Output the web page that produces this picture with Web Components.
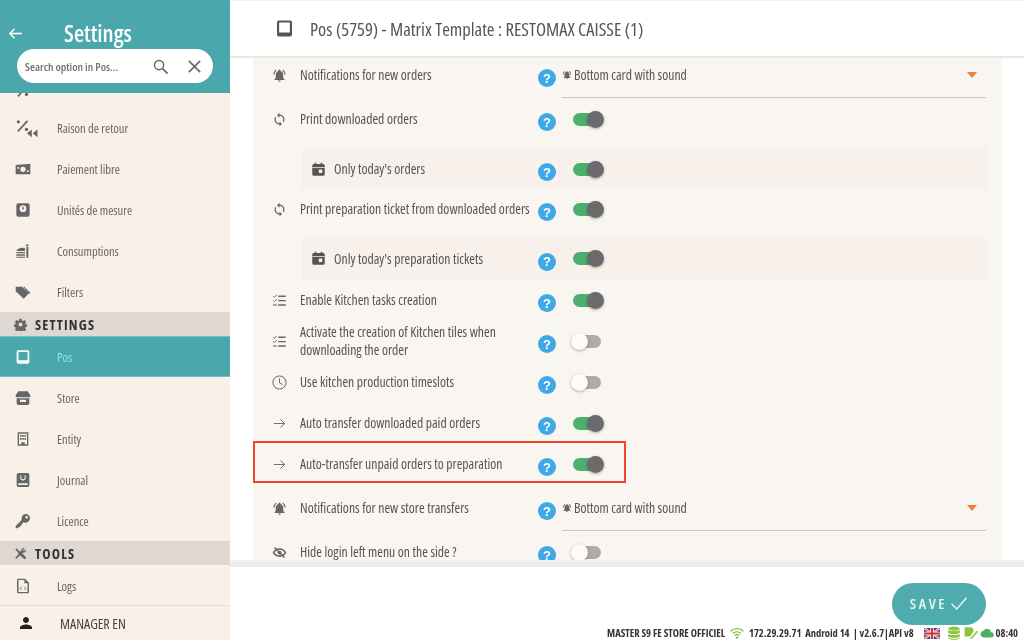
<!DOCTYPE html>
<html lang="en"><head><meta charset="utf-8"><title>Settings</title>
<style>
html,body{margin:0;height:100%;overflow:hidden;background:#fff}
body{font-family:"Open Sans","Lato",sans-serif;font-stretch:75%;color:#555}
</style></head><body>
<app-shell>
  <side-bar slot="side">
    <nav-item partial icon="pct"></nav-item>
    <nav-item icon="percent">Raison de retour</nav-item>
    <nav-item icon="money">Paiement libre</nav-item>
    <nav-item icon="scale">Unités de mesure</nav-item>
    <nav-item icon="food">Consumptions</nav-item>
    <nav-item icon="tags">Filters</nav-item>
    <nav-section icon="gear">SETTINGS</nav-section>
    <nav-item active icon="tablet">Pos</nav-item>
    <nav-item icon="store">Store</nav-item>
    <nav-item icon="building">Entity</nav-item>
    <nav-item icon="journal">Journal</nav-item>
    <nav-item icon="key">Licence</nav-item>
    <nav-section icon="tools">TOOLS</nav-section>
    <nav-item icon="code">Logs</nav-item>
  </side-bar>
  <main-head slot="head">Pos (5759) - Matrix Template : RESTOMAX CAISSE (1)</main-head>
  <set-row first h="46" icon="bell">Notifications for new orders<sel-ect slot="control">Bottom card with sound</sel-ect></set-row>
  <set-row h="42" icon="sync">Print downloaded orders<to-ggle slot="control" on></to-ggle></set-row>
  <set-row sub h="42" icon="cal">Only today's orders<to-ggle slot="control" on></to-ggle></set-row>
  <set-row h="38" icon="sync">Print preparation ticket from downloaded orders<to-ggle slot="control" on></to-ggle></set-row>
  <set-row sub h="41" icon="cal" gap="10">Only today's preparation tickets<to-ggle slot="control" on></to-ggle></set-row>
  <set-row h="42" icon="list">Enable Kitchen tasks creation<to-ggle slot="control" on></to-ggle></set-row>
  <set-row h="40" icon="list">Activate the creation of Kitchen tiles when downloading the order<to-ggle slot="control"></to-ggle></set-row>
  <set-row h="42" icon="clock">Use kitchen production timeslots<to-ggle slot="control"></to-ggle></set-row>
  <set-row h="40" icon="arrow">Auto transfer downloaded paid orders<to-ggle slot="control" on></to-ggle></set-row>
  <set-row h="42" icon="arrow" mark>Auto-transfer unpaid orders to preparation<to-ggle slot="control" on></to-ggle></set-row>
  <set-row h="46" icon="bell">Notifications for new store transfers<sel-ect slot="control">Bottom card with sound</sel-ect></set-row>
  <set-row h="42" icon="eyeoff">Hide login left menu on the side ?<to-ggle slot="control"></to-ggle></set-row>
  <foot-bar slot="foot"></foot-bar>
</app-shell>
<script>
const P={
tablet:'<path fill-rule="evenodd" d="M5 2h14a2.500 2.500 0 0 1 2.500 2.500v15a2.500 2.500 0 0 1-2.500 2.500H5a2.500 2.500 0 0 1-2.500-2.500v-15A2.500 2.500 0 0 1 5 2zm.2 2.400v12.600h13.600V4.400z"/>',
bell:'<path d="M7.580 4.080 6.150 2.650C3.750 4.480 2.170 7.300 2.030 10.500h2c.15-2.650 1.510-4.970 3.550-6.420zm12.390 6.420h2c-.15-3.200-1.730-6.020-4.120-7.850l-1.420 1.430c2.020 1.450 3.390 3.770 3.540 6.420zM18 11c0-3.070-1.640-5.640-4.500-6.320V4c0-.83-.67-1.500-1.500-1.500s-1.500.67-1.500 1.500v.68C7.630 5.360 6 7.920 6 11v5l-2 2v1h16v-1l-2-2v-5zm-6 11c.14 0 .27-.01.4-.04.65-.14 1.180-.58 1.440-1.180.1-.24.15-.5.15-.78h-4c.01 1.100.9 2 2.010 2z"/>',
sync:'<path d="M12 4V1L8 5l4 4V6c3.310 0 6 2.690 6 6 0 1.010-.25 1.970-.7 2.800l1.460 1.460C19.540 15.030 20 13.570 20 12c0-4.420-3.580-8-8-8zm0 14c-3.310 0-6-2.690-6-6 0-1.010.25-1.970.7-2.800L5.240 7.740C4.460 8.970 4 10.430 4 12c0 4.420 3.580 8 8 8v3l4-4-4-4v3z"/>',
cal:'<path fill-rule="evenodd" d="M6 1h2.500v2h7V1H18v2h1.500A2.500 2.500 0 0 1 22 5.500v14a2.500 2.500 0 0 1-2.500 2.500h-15A2.500 2.500 0 0 1 2 19.500v-14A2.500 2.500 0 0 1 4.500 3H6zm6.500 11v5.500H18V12z"/><rect x="2" y="8" width="20" height="1.200" fill="#f8f1eb"/>',
list:'<path d="M10 4h12v2.200H10zM10 11h12v2.200H10zM10 18h12v2.200H10z"/><path d="M2 5l1.800 1.800L7.400 3" fill="none" stroke="currentColor" stroke-width="1.500"/><path d="M2 12l1.800 1.800L7.400 10" fill="none" stroke="currentColor" stroke-width="1.500"/><rect x="2" y="18" width="2.500" height="2.500"/><rect x="5.500" y="18" width="2" height="2.500"/>',
clock:'<circle cx="12" cy="12" r="10.500" fill="none" stroke="currentColor" stroke-width="1.600"/><path d="M12 5.500v7l5 3" fill="none" stroke="currentColor" stroke-width="1.600"/>',
arrow:'<path d="M3 12h17M13.500 5.500 20 12l-6.500 6.500" fill="none" stroke="currentColor" stroke-width="1.500"/>',
eyeoff:'<path fill-rule="evenodd" d="M12 5C7 5 3 8 1 12c2 4 6 7 11 7s9-3 11-7c-2-4-6-7-11-7zm0 2.500c3.400 0 6.300 1.800 8 4.500-1.700 2.700-4.600 4.500-8 4.500S5.700 14.700 4 12c1.700-2.700 4.600-4.500 8-4.500z"/><circle cx="12" cy="12" r="3"/><path d="M4 4l16 16" stroke="currentColor" stroke-width="2.200"/>',
percent:'<path d="M3 15 13 4" stroke="currentColor" stroke-width="1.800" fill="none"/><circle cx="3.500" cy="5" r="1.700"/><circle cx="12" cy="13" r="1.700"/><path d="M17.500 13v8l-5-4zM23.500 13v8l-5-4z"/>',
pct:'<path d="M3 15 13 4" stroke="currentColor" stroke-width="1.800" fill="none"/><circle cx="12" cy="13" r="1.700"/>',
money:'<path fill-rule="evenodd" d="M1 6l22-2v16H1zm11 2.500a4 4 0 1 0 0 8 4 4 0 0 0 0-8zM3.500 9v2.500H6V9zm14.500 5v2.500h2.500V14z"/>',
scale:'<path fill-rule="evenodd" d="M5 2h14a3 3 0 0 1 3 3v14a3 3 0 0 1-3 3H5a3 3 0 0 1-3-3V5a3 3 0 0 1 3-3zm7 3a5 5 0 1 0 0 10 5 5 0 0 0 0-10zm-.8 2h1.600l.6 4h-2.800z"/>',
food:'<path d="M2 12c1-3 5-5 9-5 2 0 3 .5 4 1v4zM2 13.500h13v2H2zM2 17h13v2H2zM2 20.500h13V22H2zM17 6h3v16h-3zM16 3l4-1v3h-4z"/>',
tags:'<path d="M1 4h9.500L21 14l-8 8L1 11z"/><path d="M14 4l9 9-1 2-10-11z"/>',
gear:'<path fill-rule="evenodd" d="M10 1.500h4l.6 3 2.200 1 2.700-1.600 2.800 2.800-1.600 2.700 1 2.200 3 .6v4l-3 .6-1 2.200 1.600 2.700-2.800 2.800-2.700-1.600-2.200 1-.6 3h-4l-.6-3-2.200-1-2.700 1.600-2.800-2.800 1.600-2.700-1-2.200-3-.6v-4l3-.6 1-2.200-1.600-2.700 2.800-2.800 2.700 1.600 2.200-1zM12 8.200a3.800 3.800 0 1 0 0 7.600 3.800 3.800 0 0 0 0-7.600z"/>',
store:'<path fill-rule="evenodd" d="M5 2h14l4 6v3H1V8zM2.500 12.500h19V20a2.500 2.500 0 0 1-2.500 2.500H5A2.500 2.500 0 0 1 2.500 20zm5 2v3.500h9v-3.500z"/>',
building:'<path fill-rule="evenodd" d="M4 2h16v20H4zm2 2v16h3.500v-3h5v3H18V4zm1.500 2h2.500v2.500H7.500zm3.300 0h2.500v2.500h-2.500zm3.300 0h2.500v2.500h-2.500zM7.500 10.500H10V13H7.500zm3.300 0h2.500V13h-2.500zm3.300 0h2.500V13h-2.500z"/>',
journal:'<path fill-rule="evenodd" d="M5 1.500h14a2.500 2.500 0 0 1 2.500 2.500v16a2.500 2.500 0 0 1-2.500 2.500H5A2.500 2.500 0 0 1 2.500 20V4A2.500 2.500 0 0 1 5 1.500zM5 17v2.500h14V17zm3-12v6l4 2 4-2V5h-1.500v5L12 11l-2.500-1V5z"/>',
key:'<path fill-rule="evenodd" d="M16 1.500a6.500 6.500 0 0 1 6.500 6.500A6.500 6.500 0 0 1 13 13.800L10 16.800V19H7.500v2.500H5L3.500 23H1v-3.500l9.200-9.200A6.500 6.500 0 0 1 16 1.500zm1.500 3a2 2 0 1 0 0 4 2 2 0 0 0 0-4z"/>',
tools:'<path d="M2.500 4.500 4.500 2.500l5.500 5.500 1-1 11 12a2.300 2.300 0 0 1-3 3L7 12l1-1.500z"/><path d="M3 19 13.500 8.500C12.500 5 15.500 1 20 2l-3.500 3.500 2 2L22 4c1 4.500-3 7.500-6.500 6.500L5 21a1.400 1.400 0 0 1-2-2z"/>',
code:'<path fill-rule="evenodd" d="M5 1h10l6 6v14a2 2 0 0 1-2 2H5a2 2 0 0 1-2-2V3a2 2 0 0 1 2-2zm.2 2v18h13.600V8H14V3z"/><path d="M10 13l-2.500 2.500L10 18M14 13l2.500 2.500L14 18" fill="none" stroke="currentColor" stroke-width="1.400"/>',
person:'<path d="M12 12c2.210 0 4-1.790 4-4s-1.790-4-4-4-4 1.790-4 4 1.790 4 4 4zm0 2c-2.670 0-8 1.340-8 4v2h16v-2c0-2.660-5.330-4-8-4z"/>',
search:'<circle cx="10" cy="10" r="6.500" fill="none" stroke="currentColor" stroke-width="2"/><path d="M15 15l7 7" stroke="currentColor" stroke-width="2.400"/>',
close:'<path d="M4 4l16 16M20 4 4 20" stroke="currentColor" stroke-width="2.200"/>',
back:'<path d="M22 12H3M10.500 4.500 3 12l7.500 7.500" fill="none" stroke="currentColor" stroke-width="2.200"/>',
check:'<path d="M2 13l7 7L22 5" fill="none" stroke="currentColor" stroke-width="1.900"/>',
wifi:'<path d="M1 9c6-6 16-6 22 0M5 13c4-4 10-4 14 0M8.500 16.500c2-2 5-2 7 0" fill="none" stroke="currentColor" stroke-width="2.400"/><circle cx="12" cy="20" r="2"/>',
db:'<ellipse cx="12" cy="4.500" rx="10" ry="3.500"/><path d="M2 7c1 2.500 19 2.500 20 0v4.500c-1 3-19 3-20 0zM2 13.500c1 2.500 19 2.500 20 0V18c-1 3-19 3-20 0z"/><path d="M2 19.500c2 3 18 3 20 0V20c0 2-4.500 3.500-10 3.500S2 22 2 20z"/>',
edit:'<path d="M1 2h12l3 3v5l-5 8H1z"/><path d="M12 20 22 8l2 2-10 12H8z"/>',
cloud:'<path d="M19 10.500A7 7 0 0 0 5.800 8.600 5.500 5.500 0 0 0 6 19.500h13a4.500 4.500 0 0 0 0-9z"/>'
};
function def(name,css,html,init){
  customElements.define(name,class extends HTMLElement{
    connectedCallback(){
      if(this.shadowRoot)return;
      const r=this.attachShadow({mode:'open'});
      r.innerHTML='<style>'+css+'</style>'+(typeof html==='function'?html(this):html);
      if(init)init(this,r);
    }
  });
}
def('x-icon',':host{display:inline-flex;flex:none;width:var(--s,16px);height:var(--s,16px);color:inherit}svg{width:100%;height:100%;fill:currentColor;display:block}',
 h=>`<svg viewBox="0 0 24 24" aria-hidden="true">${P[h.getAttribute('name')]||''}</svg>`);
def('app-shell',`:host{display:flex;width:1024px;height:640px;overflow:hidden;background:#fff;filter:blur(.35px)}
 .m{flex:1;min-width:0;display:flex;flex-direction:column}
 .b{height:502px;padding:0 22px 0 23px;flex:none;overflow:hidden}
 .p{height:100%;background:#f9f5f1;overflow:hidden;display:flex;flex-direction:column}
 .sh{height:7px;flex:none;background:linear-gradient(#f1f2f5,#e9ebf0)}`,
 `<slot name="side"></slot><div class="m"><slot name="head"></slot><div class="b"><div class="p"><slot></slot></div></div><div class="sh"></div><slot name="foot"></slot></div>`);
def('side-bar',`:host{display:flex;flex-direction:column;width:230px;height:640px;flex:none;background:#f9f0e8;overflow:hidden}
 header{height:93px;flex:none;background:#4aa8ac;color:#fff;display:flex;flex-direction:column;box-sizing:border-box;padding:18px 17px 0 0}
 .t{display:flex;align-items:center;height:31px}
 .t x-icon{--s:15px;margin:0 41px 0 8px}
 .t b{font-weight:600;font-size:23.300px;line-height:31px}
 .s{margin:0 0 0 17px;height:34px;background:#fff;border-radius:17px;display:flex;align-items:center;color:#666;padding:0 10px 0 8px;font-size:11.500px;font-weight:600;white-space:nowrap}
 .s span{flex:1;color:#707070}
 .s x-icon{--s:17px;margin-left:17px}
 .l{flex:1;min-height:0;overflow:hidden;display:flex;flex-direction:column}
 .u{height:35px;flex:none;box-sizing:border-box;border-top:1px solid #e5ded8;display:flex;align-items:center;color:#444;font-size:14px}
 .u x-icon{--s:18px;margin:0 25px 0 17px;color:#222}`,
 `<header><div class="t"><x-icon name="back"></x-icon><b>Settings</b></div><div class="s"><span>Search option in Pos...</span><x-icon name="search"></x-icon><x-icon name="close"></x-icon></div></header>
 <div class="l"><slot></slot></div><div class="u"><x-icon name="person"></x-icon>MANAGER EN</div>`);
def('nav-item',`:host{display:flex;flex:none;height:41px;box-sizing:border-box;padding-top:1px;overflow:hidden;align-items:center;color:#666;font-size:12.500px;padding-left:15px;white-space:nowrap}
 :host([partial]){height:14px;padding-top:0;align-items:flex-end}
 :host([partial]) x-icon{margin-bottom:2px}
 x-icon{--s:16px;margin-right:26px;color:#666}
 :host([icon=percent]) x-icon,:host([icon=pct]) x-icon{--s:23px;margin-right:19px}
 :host([active]){background:#4aa8ac;color:#8be6e6;box-shadow:inset 0 1px 0 #62c6c8,inset 0 -1px 0 #62c6c8}
 :host([active]) x-icon{color:#fff}`,
 h=>`<x-icon name="${h.getAttribute('icon')}"></x-icon><span><slot></slot></span>`);
def('nav-section',`:host{display:flex;flex:none;height:24px;align-items:center;background:#dfd8d2;color:#333;font-weight:700;font-size:14px;letter-spacing:1.200px;padding-left:14px}
 x-icon{--s:13px;margin-right:8px;color:#666}`,
 h=>`<x-icon name="${h.getAttribute('icon')}"></x-icon><slot></slot>`);
def('main-head',`:host{display:flex;flex:none;height:58px;box-sizing:border-box;border-bottom:2px solid #ebe7e3;border-top:1px solid #f2f2f2;align-items:center;padding-left:45px;font-size:18.550px;color:#555;white-space:nowrap}
 x-icon{--s:19px;margin-right:16px}`,
 `<x-icon name="tablet"></x-icon><slot></slot>`);
def('set-row',`:host{display:grid;flex:none;position:relative;align-items:center;grid-template-columns:47px 238px 18px 6px 424px;font-size:13.700px;line-height:18px;color:#555;box-sizing:border-box}
 :host([first]){margin-top:-6px}
 :host([sub]){margin-left:49px;width:685px;grid-template-columns:32px 204px 18px 6px 425px;background:#f8f1eb}
 .i{display:flex;justify-content:center;padding-left:6px;color:#666}
 :host([sub]) .i{padding-left:0;color:#555}
 x-icon{--s:15px}
 .c{grid-column:5;align-self:stretch;display:flex;align-items:center}
 .h{grid-column:3;margin-top:6px}
 .mk{position:absolute;left:0;top:-2px;width:373px;height:42px;box-sizing:border-box;border:2px solid #f0452a;pointer-events:none}`,
 h=>`<div class="i"><x-icon name="${h.getAttribute('icon')}"></x-icon></div><div><slot></slot></div><help-dot class="h"></help-dot><div class="c"><slot name="control"></slot></div>${h.hasAttribute('mark')?'<div class="mk"></div>':''}`,
 h=>{h.style.height=h.getAttribute('h')+'px';
  if(h.hasAttribute('sub'))h.style.marginTop=(h.getAttribute('gap')||8)+'px';});
def('help-dot',`:host{display:flex;width:18px;height:18px;border-radius:50%;background:#3fa9e8;color:#fff;align-items:center;justify-content:center;font:700 13px "Liberation Sans",sans-serif}`,`?`);
def('to-ggle',`:host{display:block;position:relative;width:28px;height:13px;margin-left:11px;border-radius:7px;background:#b0aba7}
 :host([on]){background:#4caf6e}
 i{position:absolute;top:-2px;left:-2px;width:17px;height:17px;border-radius:50%;background:#fcfbfa;box-shadow:0 1px 3px rgba(0,0,0,.3)}
 :host([on]) i{left:14px;background:#6b6a6c}`,`<i></i>`);
def('sel-ect',`:host{display:flex;flex:1;align-items:center;align-self:stretch;box-sizing:border-box;border-bottom:1px solid #ccc8c4;color:#555;font-size:13.700px;padding:1px 9px 0 0}
 x-icon{--s:10px;margin-right:2px;color:#666}
 span{flex:1}
 .c{width:0;height:0;border:5.500px solid transparent;border-top:6px solid #ee8038;border-bottom:0}`,
 `<x-icon name="bell"></x-icon><span><slot></slot></span><div class="c"></div>`);
def('foot-bar',`:host{flex:1;display:flex;flex-direction:column;min-height:0}
 .sv{display:flex;justify-content:flex-end;padding:16px 38px 0 0}
 button{width:94px;height:42px;border:0;border-radius:21px;background:#4eabae;color:#e9f7f7;font:inherit;font-weight:600;font-size:15px;letter-spacing:2.600px;display:flex;align-items:center;justify-content:center;gap:3px;padding:0 0 3px}
 button x-icon{--s:18px}
 .st{flex:1;display:flex;justify-content:flex-end;align-items:center;padding-right:6px;font-size:10.500px;font-weight:700;color:#333;white-space:nowrap;margin-top:1px}
 .st x-icon{--s:14px}
 .g{color:#7ec23c;margin:0 5px}
 .f{width:16px;height:11px;margin:0 7px 0 10px;flex:none;display:block}`,
 `<div class="sv"><button>SAVE<x-icon name="check"></x-icon></button></div>
 <div class="st">MASTER S9 FE STORE OFFICIEL<x-icon class="g" name="wifi"></x-icon>172.29.29.71&nbsp;&nbsp;Android 14&nbsp;&nbsp;|&nbsp;v2.6.7|API v8<svg class="f" viewBox="0 0 16 11"><rect width="16" height="11" fill="#2b3f86"/><path d="M0 0l16 11M16 0 0 11" stroke="#fff" stroke-width="2.200"/><path d="M0 0l16 11M16 0 0 11" stroke="#d22" stroke-width=".8"/><path d="M8 0v11M0 5.500h16" stroke="#fff" stroke-width="3.400"/><path d="M8 0v11M0 5.500h16" stroke="#d22" stroke-width="1.800"/></svg><x-icon name="db" style="color:#8cc63f;margin-right:3px"></x-icon><x-icon name="edit" style="color:#8cc63f;margin-right:2px"></x-icon><x-icon name="cloud" style="color:#4cb060;margin-right:2px"></x-icon>08:40</div>`);
</script>
</body></html>
